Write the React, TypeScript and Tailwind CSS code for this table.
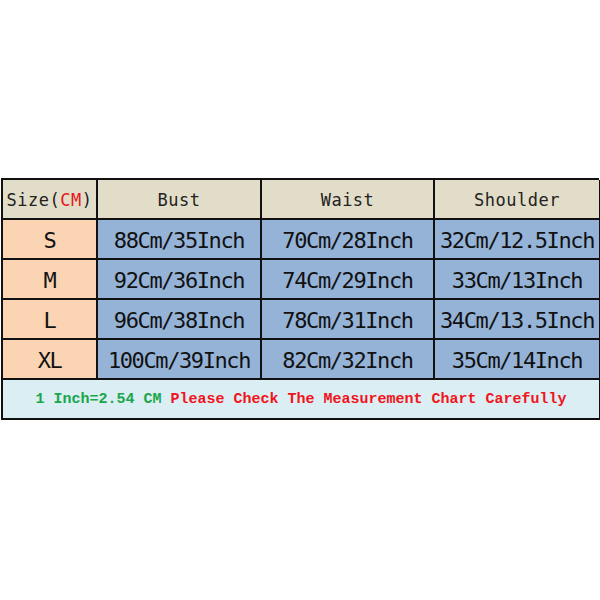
const rows = [
  { size: 'S', bust: '88Cm/35Inch', waist: '70Cm/28Inch', shoulder: '32Cm/12.5Inch' },
  { size: 'M', bust: '92Cm/36Inch', waist: '74Cm/29Inch', shoulder: '33Cm/13Inch' },
  { size: 'L', bust: '96Cm/38Inch', waist: '78Cm/31Inch', shoulder: '34Cm/13.5Inch' },
  { size: 'XL', bust: '100Cm/39Inch', waist: '82Cm/32Inch', shoulder: '35Cm/14Inch' },
];

const mono = "font-['DejaVu_Sans_Mono',monospace]";
const cell = 'h-10 pt-[3px] flex items-center justify-center border-r-2 border-b-2 border-[#111]';
const head = `${cell} bg-[#e2ddc8] text-[17px] tracking-[0.5px] text-[#222]`;
const data = `${cell} bg-[#95b3d7] text-[22px] tracking-[-1.4px] text-[#111]`;

export default function App() {
  return (
    <div className={`w-[600px] h-[600px] bg-white pt-[178px] pl-px ${mono}`}>
      <div className="w-[598px] grid grid-cols-[95px_164px_173px_166px] border-l-2 border-t-2 border-[#111]">
        <div className={head}>
          Size(<span className="text-[#e8151b]">CM</span>)
        </div>
        <div className={head}>Bust</div>
        <div className={head}>Waist</div>
        <div className={head}>Shoulder</div>
        {rows.map((r) => (
          <div key={r.size} className="contents">
            <div className={`${cell} bg-[#fbd4b4] text-[22px] tracking-[-1.4px] text-[#111]`}>{r.size}</div>
            <div className={data}>{r.bust}</div>
            <div className={data}>{r.waist}</div>
            <div className={data}>{r.shoulder}</div>
          </div>
        ))}
        <div className={`${cell} col-span-4 bg-[#dbeef3] text-[15px] font-bold font-['Liberation_Mono',monospace]`}>
          <span className="text-[#1aa64a]">1 Inch=2.54 CM</span>
          <span className="text-[#f0141c] whitespace-pre"> Please Check The Measurement Chart Carefully</span>
        </div>
      </div>
    </div>
  );
}
